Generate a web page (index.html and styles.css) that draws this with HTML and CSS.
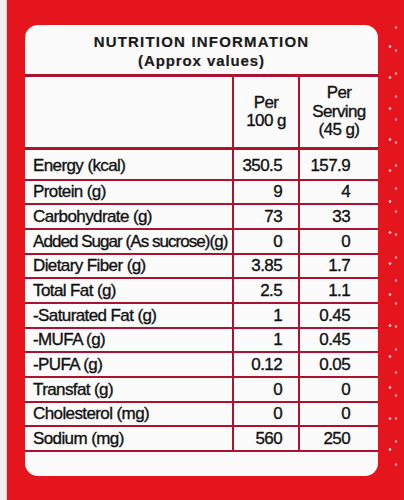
FILE: index.html
```html
<!DOCTYPE html>
<html lang="en">
<head>
  <meta charset="UTF-8" />
  <meta name="viewport" content="width=device-width, initial-scale=1.0" />
  <title>Nutrition Information</title>
  <link rel="stylesheet" href="styles.css">
</head>
<body>
  <div class="edge"></div>
  <div class="sheet">
    <div class="panel">
      <div class="panel-head">
        <div class="title">NUTRITION INFORMATION</div>
        <div class="subtitle">(Approx values)</div>
      </div>
      <div class="row head-row">
        <span></span>
        <span class="col-head">Per<br>100 g</span>
        <span class="col-head">Per<br>Serving<br>(45 g)</span>
      </div>
      <div class="row first-row"><span>Energy (kcal)</span><span>350.5</span><span>157.9</span></div>
      <div class="row"><span>Protein (g)</span><span>9</span><span>4</span></div>
      <div class="row"><span>Carbohydrate (g)</span><span>73</span><span>33</span></div>
      <div class="row"><span class="tight">Added Sugar (As sucrose)(g)</span><span>0</span><span>0</span></div>
      <div class="row"><span>Dietary Fiber (g)</span><span>3.85</span><span>1.7</span></div>
      <div class="row"><span>Total Fat (g)</span><span>2.5</span><span>1.1</span></div>
      <div class="row"><span>-Saturated Fat (g)</span><span>1</span><span>0.45</span></div>
      <div class="row"><span>-MUFA (g)</span><span>1</span><span>0.45</span></div>
      <div class="row"><span>-PUFA (g)</span><span>0.12</span><span>0.05</span></div>
      <div class="row"><span>Transfat (g)</span><span>0</span><span>0</span></div>
      <div class="row"><span>Cholesterol (mg)</span><span>0</span><span>0</span></div>
      <div class="row"><span>Sodium (mg)</span><span>560</span><span>250</span></div>
    </div>
    <div class="perf"></div>
  </div>
</body>
</html>
```

FILE: styles.css
```css
:root {
  --red: #e5151e;
  --line: #ab1331;
  --ink: #111;
}
html, body {
  margin: 0;
  height: 500px;
  overflow: hidden;
}
body {
  display: flex;
  font-family: 'Liberation Sans', Arial, sans-serif;
  color: var(--ink);
  background: var(--red);
}
.edge {
  width: 6px;
  background: #f4efef;
  border-right: 1px solid #e9c9cb;
}
.sheet {
  flex: 1;
  display: flex;
  background: var(--red);
  padding: 25px 0 24px 18px;
}
.panel {
  width: 353px;
  height: 451px;
  background: #fcfbfb;
  border-radius: 13px;
  overflow: hidden;
}
.panel-head {
  box-sizing: border-box;
  height: 52px;
  padding-top: 7px;
  border-bottom: 3px solid var(--line);
  text-align: center;
  font-weight: bold;
  font-size: 15px;
  line-height: 19px;
  color: #1a1a1a;
  -webkit-text-stroke: 0.2px currentColor;
}
.title {
  letter-spacing: 1.2px;
}
.subtitle {
  letter-spacing: 0.9px;
}
.row {
  display: grid;
  grid-template-columns: 209px 66px 1fr;
  box-sizing: border-box;
  height: 24.67px;
  border-bottom: 2px solid var(--line);
  font-size: 17px;
  letter-spacing: -0.6px;
  -webkit-text-stroke: 0.35px currentColor;
}
.row span {
  display: flex;
  align-items: center;
  justify-content: flex-end;
  box-sizing: border-box;
  padding-top: 1px;
}
.row span:first-child {
  justify-content: flex-start;
  padding-left: 8px;
  border-right: 2px solid var(--line);
}
.row span:nth-child(2) {
  padding-right: 16px;
  border-right: 2px solid var(--line);
}
.row span:last-child {
  padding-right: 28px;
}
.row span.tight {
  letter-spacing: -0.95px;
}
.head-row {
  height: 73px;
  border-bottom-width: 3px;
}
.head-row span.col-head {
  justify-content: center;
  text-align: center;
  padding: 0;
  line-height: 18.5px;
}
.first-row {
  height: 30.6px;
}
.first-row span {
  padding-top: 3px;
}
.perf {
  flex: 1;
  background-image:
    radial-gradient(circle, rgba(255, 220, 220, 0.75) 1.2px, transparent 1.8px),
    radial-gradient(circle, rgba(255, 225, 225, 0.6) 1px, transparent 1.6px);
  background-size: 8px 31px, 8px 23px;
  background-position: 8px 6px, 14px 14px;
  background-repeat: repeat-y;
}
```
